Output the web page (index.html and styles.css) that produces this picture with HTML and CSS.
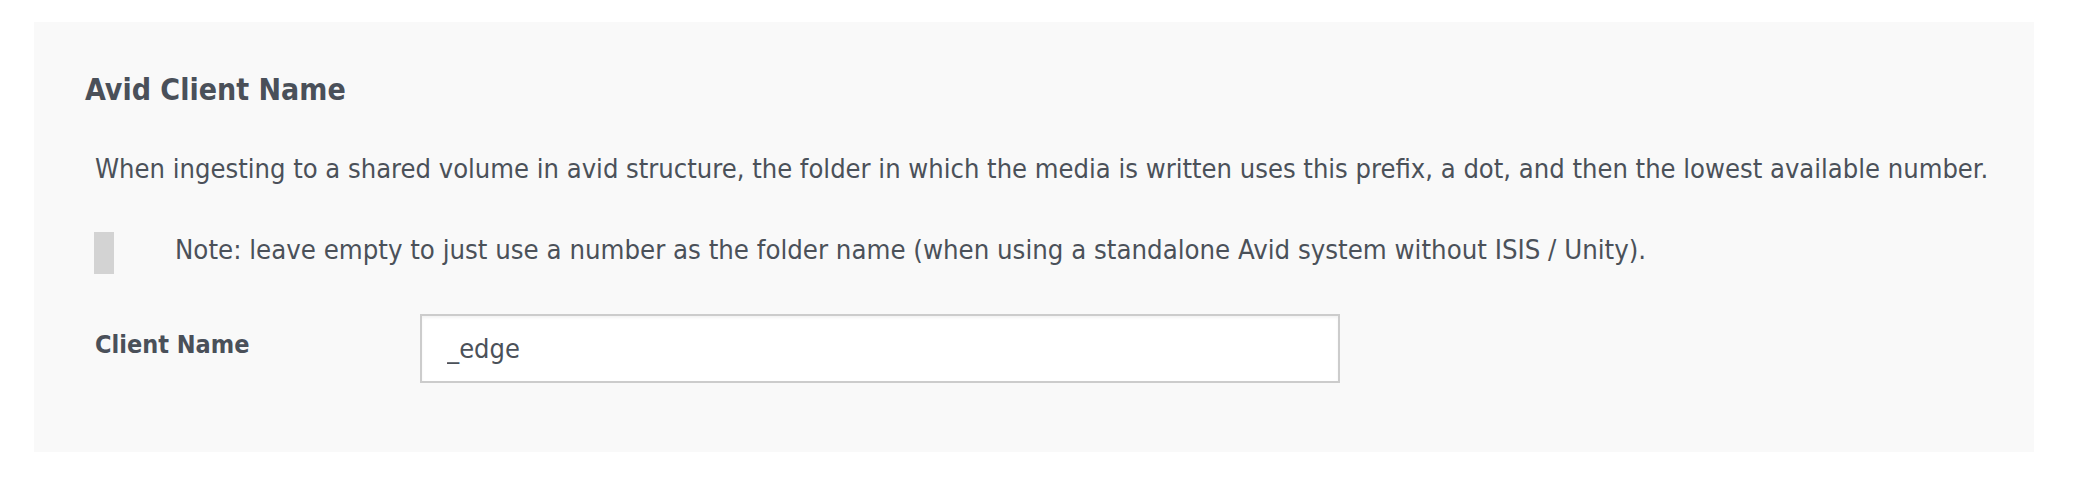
FILE: index.html
```html
<!DOCTYPE html>
<html lang="en">
<head>
<meta charset="utf-8">
<title>Avid Client Name</title>
<link rel="stylesheet" href="styles.css">
</head>
<body>
<div class="page">
  <section class="panel">
    <h2 class="title">Avid Client Name</h2>
    <div class="content">
      <p class="desc">When ingesting to a shared volume in avid structure, the folder in which the media is written uses this prefix, a dot, and then the lowest available number.</p>
      <div class="note">
        <span class="note-bar"></span>
        <p class="note-text">Note: leave empty to just use a number as the folder name (when using a standalone Avid system without ISIS / Unity).</p>
      </div>
      <div class="field">
        <label class="field-label" for="client">Client Name</label>
        <input class="field-input" id="client" type="text" value="_edge">
      </div>
    </div>
  </section>
</div>
</body>
</html>
```
FILE: styles.css
```css
html, body {
  margin: 0;
  padding: 0;
  background: #ffffff;
}
body {
  font-family: "DejaVu Sans Condensed", "DejaVu Sans", sans-serif;
  color: #4b5159;
}
.page {
  padding: 22px 58px 32px 34px;
}
.panel {
  background: #f9f9f9;
  padding: 50px 51px 69px 51px;
}
.title {
  margin: 0;
  font-size: 30px;
  line-height: 36px;
  font-weight: bold;
  color: #4a5059;
}
.content {
  margin-left: 10px;
}
.desc {
  margin: 43px 0 0 0;
  font-size: 27.1px;
  line-height: 36px;
  white-space: nowrap;
}
.note {
  display: flex;
  align-items: flex-start;
  margin-top: 45px;
}
.note-bar {
  width: 20px;
  height: 42px;
  margin-left: -1px;
  background: #d3d3d3;
  flex: none;
}
.note-text {
  margin: 0 0 0 61px;
  font-size: 27.3px;
  line-height: 36px;
}
.field {
  display: flex;
  align-items: flex-start;
  margin-top: 40px;
}
.field-label {
  width: 325px;
  flex: none;
  font-size: 25px;
  line-height: 36px;
  font-weight: bold;
  padding-top: 13px;
  color: #4a5059;
}
.field-input {
  width: 920px;
  height: 69px;
  box-sizing: border-box;
  margin: 0;
  border: 2px solid #cccccc;
  background: #ffffff;
  box-shadow: inset 0 2px 3px rgba(0, 0, 0, 0.05);
  padding: 0 25px;
  font-family: inherit;
  font-size: 27px;
  color: #4b5159;
  outline: none;
}
```
